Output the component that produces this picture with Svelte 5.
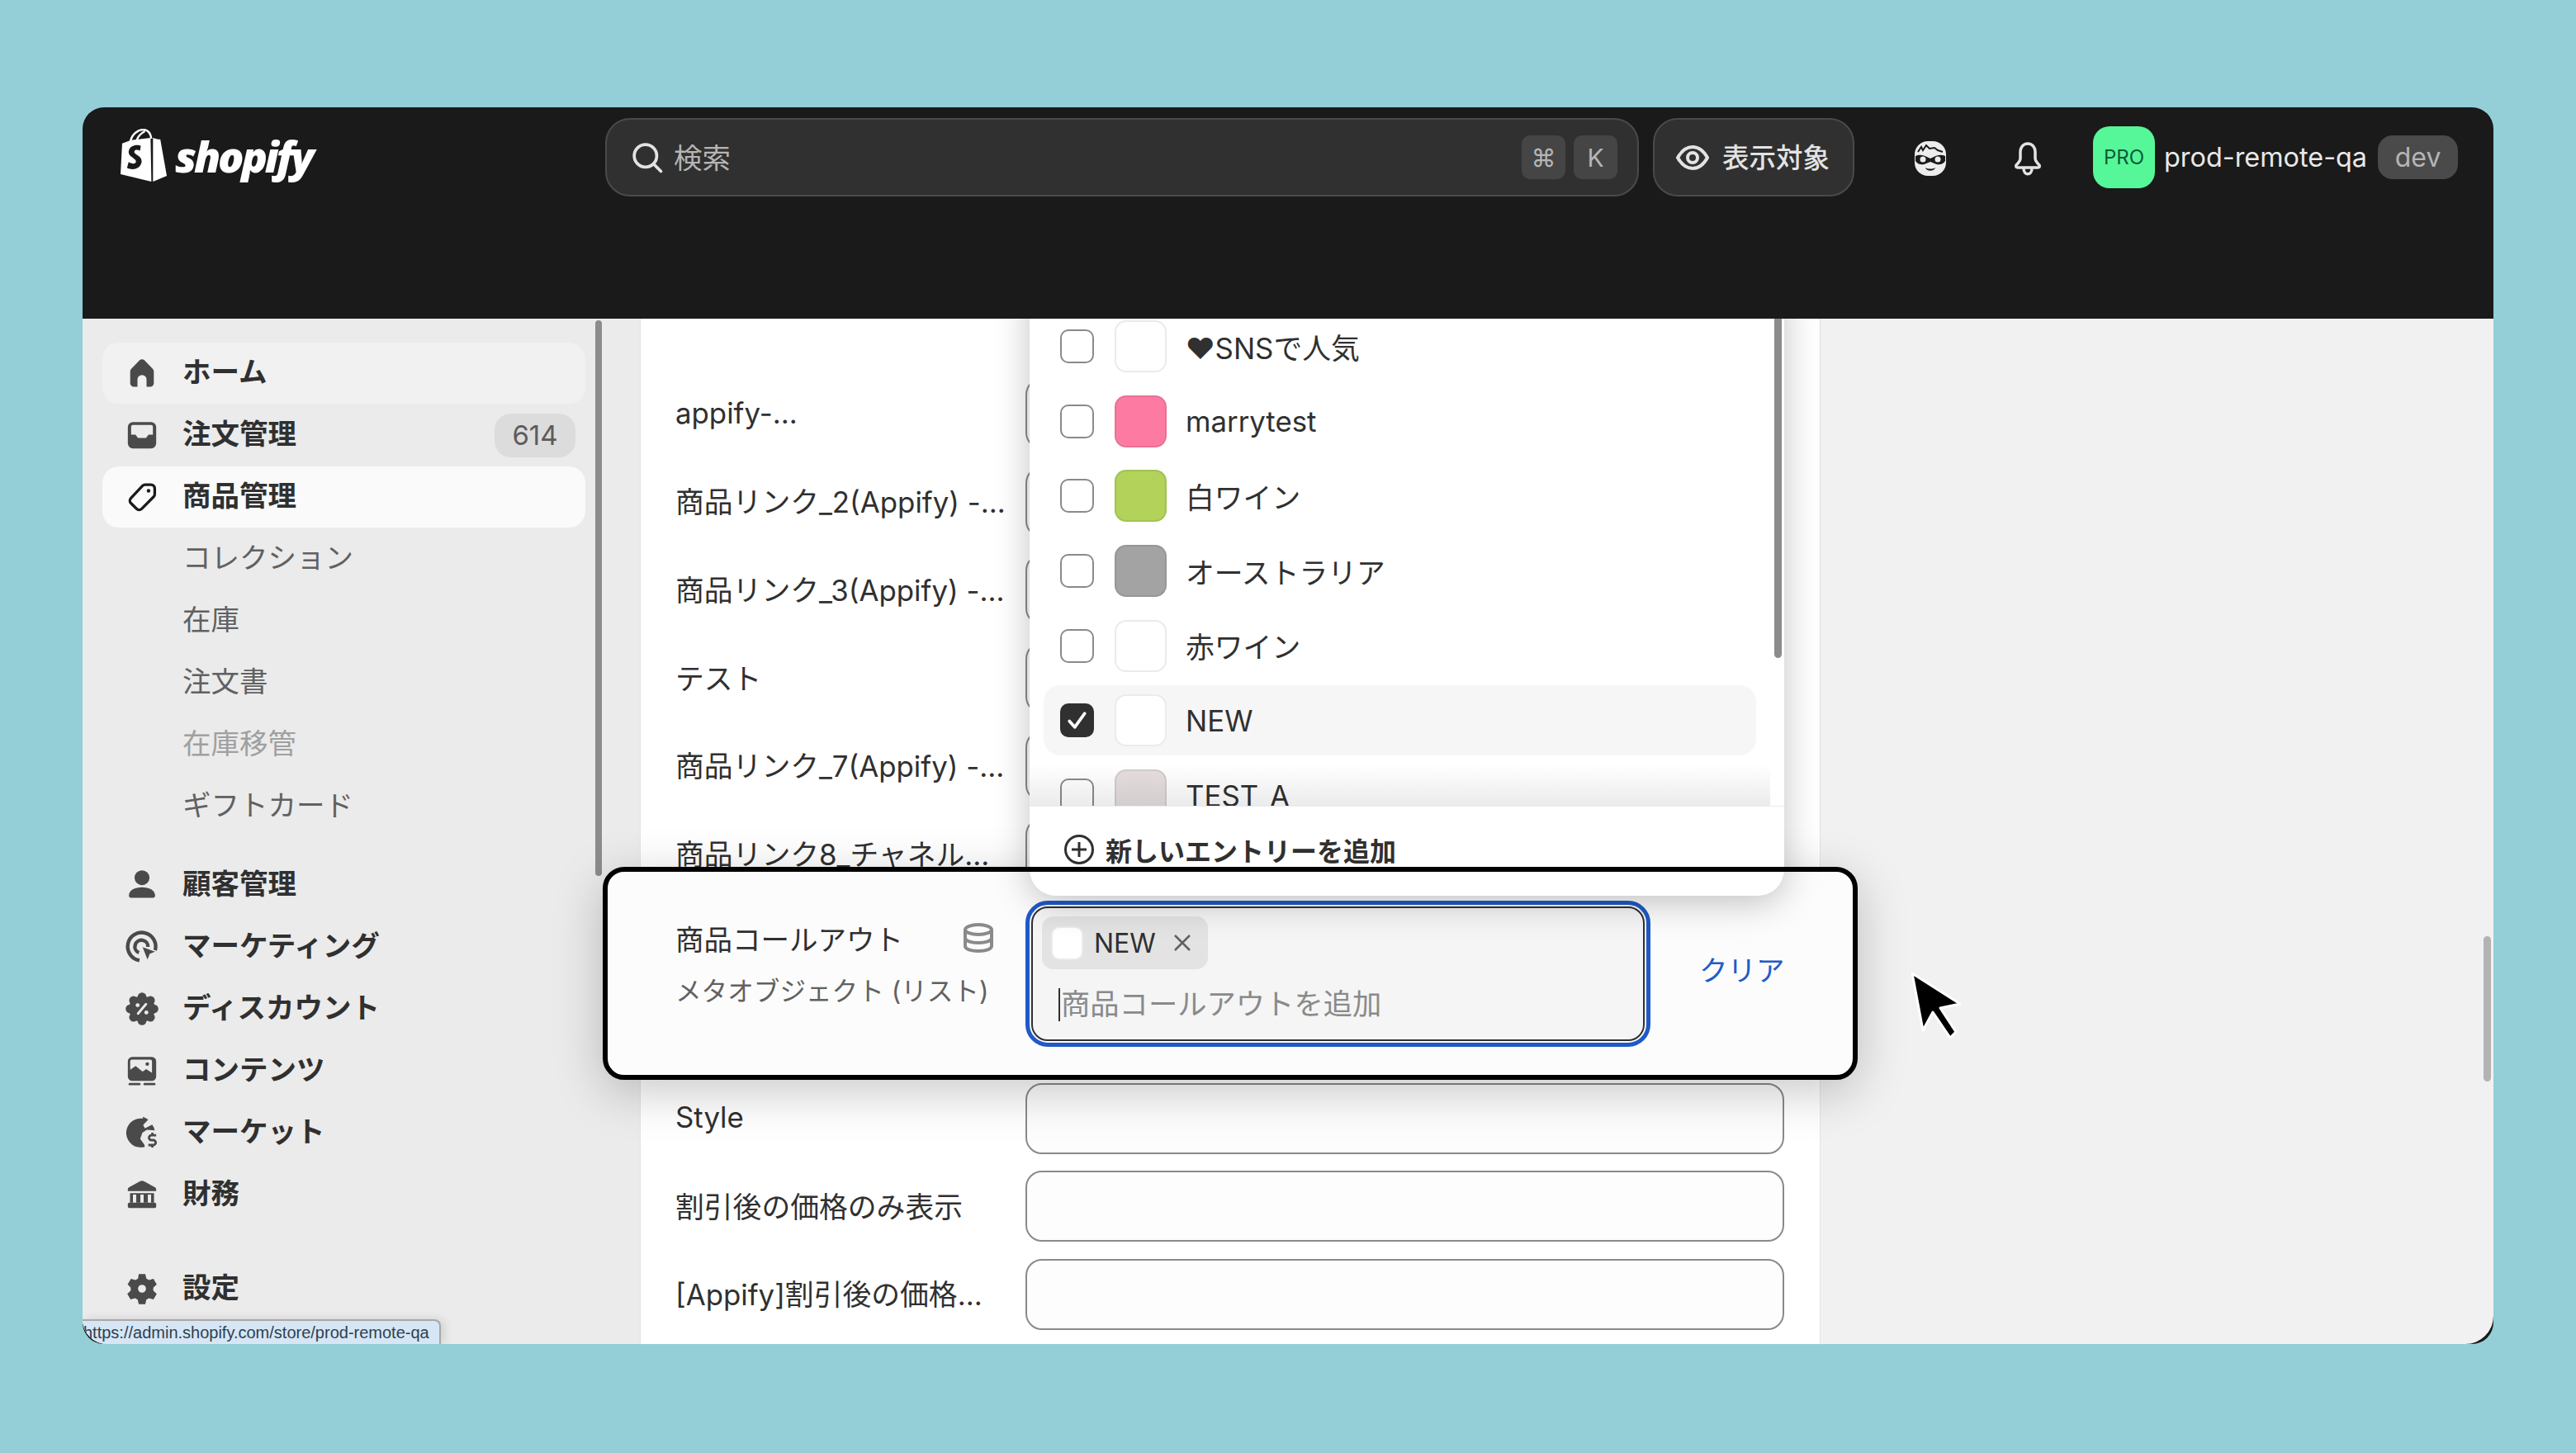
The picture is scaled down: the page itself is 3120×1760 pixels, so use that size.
<script lang="ts">
  const nav = [
    { label: 'ホーム', icon: 'home', hover: true },
    { label: '注文管理', icon: 'inbox', badge: '614' },
    { label: '商品管理', icon: 'tag', active: true },
    { label: 'コレクション', sub: true },
    { label: '在庫', sub: true },
    { label: '注文書', sub: true },
    { label: '在庫移管', sub: true, muted: true },
    { label: 'ギフトカード', sub: true },
  ];
  const nav2 = [
    { label: '顧客管理', icon: 'person' },
    { label: 'マーケティング', icon: 'target' },
    { label: 'ディスカウント', icon: 'discount' },
    { label: 'コンテンツ', icon: 'content' },
    { label: 'マーケット', icon: 'globe' },
    { label: '財務', icon: 'bank' },
  ];
  const fields = [
    'appify-...',
    '商品リンク_2(Appify) -...',
    '商品リンク_3(Appify) -...',
    'テスト',
    '商品リンク_7(Appify) -...',
    '商品リンク8_チャネル...',
    '',
    '',
    'Style',
    '割引後の価格のみ表示',
    '[Appify]割引後の価格...',
  ];
  const entries = [
    { label: '❤SNSで人気', color: '#ffffff' },
    { label: 'marrytest', color: '#fd7ba3' },
    { label: '白ワイン', color: '#b2d25a' },
    { label: 'オーストラリア', color: '#a3a3a3' },
    { label: '赤ワイン', color: '#ffffff' },
    { label: 'NEW', color: '#ffffff', checked: true },
    { label: 'TEST_A', color: '#e6dede' },
  ];
</script>

{#snippet navIcon(name: string)}
  <svg class="nav-icon" viewBox="0 0 20 20" aria-hidden="true">
    {#if name === 'home'}
      <path d="M8.6 3a2 2 0 0 1 2.8 0l4.5 4.6a2 2 0 0 1 .6 1.4v6.5a2 2 0 0 1-2 2h-2v-4a2.500 2.500 0 0 0-5 0v4h-2a2 2 0 0 1-2-2V9a2 2 0 0 1 .6-1.400z" />
    {:else if name === 'inbox'}
      <path fill-rule="evenodd" d="M5 2.800h10A2.800 2.800 0 0 1 17.800 5.600v9A2.800 2.800 0 0 1 15 17.400H5a2.800 2.800 0 0 1-2.800-2.800v-9A2.800 2.800 0 0 1 5 2.800zM5 4.400a1 1 0 0 0-1 1v4.400h2.400l1.400 1.800h4.400l1.400-1.800H16V5.400a1 1 0 0 0-1-1z" />
    {:else if name === 'tag'}
      <path class="line" d="M11.700 3.200h3.300a2 2 0 0 1 2 2v3.300a2 2 0 0 1-.6 1.400l-6.600 6.600a2 2 0 0 1-2.800 0l-3.100-3.100a2 2 0 0 1 0-2.800l6.400-6.800a2 2 0 0 1 1.400-.6z" />
      <circle class="dark" cx="13.600" cy="6.600" r="1" />
    {:else if name === 'person'}
      <circle cx="10" cy="6" r="4.100" />
      <path d="M2.800 15.800c0-3 3.200-4.600 7.200-4.600s7.200 1.600 7.200 4.600a1.200 1.200 0 0 1-1.200 1.200H4a1.200 1.200 0 0 1-1.200-1.200z" />
    {:else if name === 'target'}
      <path class="arc" d="M17.200 12A7.700 7.700 0 1 0 8.600 17.400" />
      <path class="arc" d="M13.300 10a3.600 3.600 0 1 0-5 3.200" />
      <path class="cut" d="M9.600 9.400l8.600 3.200-3.600 1.500-1.600 3.900z" />
    {:else if name === 'discount'}
      {#each [0, 45, 90, 135, 180, 225, 270, 315] as a}
        <circle cx="10" cy="3.400" r="2.400" transform="rotate({a} 10 10)" />
      {/each}
      <circle cx="10" cy="10" r="7.200" />
      <path class="slash" d="M12.200 7.400l-4.400 5.200" />
      <circle class="hole" cx="7.600" cy="8" r="1.100" />
      <circle class="hole" cx="12.400" cy="12" r="1.100" />
    {:else if name === 'content'}
      <path fill-rule="evenodd" d="M4.600 2.400h10.800A2.400 2.400 0 0 1 17.800 4.800v8.400a2.400 2.400 0 0 1-2.400 2.400H4.600a2.400 2.400 0 0 1-2.400-2.400V4.800a2.400 2.400 0 0 1 2.400-2.400zM4.400 3.900a.9.9 0 0 0-.9.9v4.600l3-2 3.800 3 2-1.300 3.200 2V4.800a.9.9 0 0 0-.9-.9z" />
      <circle cx="12.900" cy="6.300" r="1" />
      <rect x="2.600" y="16.700" width="6.600" height="1.300" rx=".65" />
      <rect x="10.800" y="16.700" width="6.600" height="1.300" rx=".65" />
    {:else if name === 'globe'}
      <path d="M10.500 2.200a8 8 0 1 0 1 15.600l-.2-1.200-2.300-3.200 1.200-3.400 2.500-1.600 4.300.4a8 8 0 0 0-1.400-3.200l-4 2-1-1.800 2.800-3a8 8 0 0 0-2.900-1.600z" />
      <path class="arc thin" d="M17.800 11.400h-2.600a1.300 1.300 0 0 0 0 2.700h1a1.300 1.300 0 0 1 0 2.700h-2.700M15.700 10v1.400M15.700 16.800v1.400" />
    {:else if name === 'bank'}
      <path d="M8.800 2.700a2.500 2.500 0 0 1 2.400 0l5.800 3.200c.6.300.8.800.8 1.300v.9H2.200v-.9c0-.5.200-1 .8-1.300z" />
      <path d="M3.400 9.200h13.200v5.200H15V10h-1.800v4.400h-2.300V10H9.100v4.400H6.800V10H5v4.400H3.400z" />
      <rect x="2.200" y="14.400" width="15.600" height="3" rx=".8" />
    {:else if name === 'gear'}
      <path fill-rule="evenodd" d="M8.200 1.900h3.600l.6 2.500 1.400.8 2.500-.7 1.800 3.100-1.900 1.800v1.600l1.900 1.800-1.800 3.100-2.500-.7-1.400.8-.6 2.500H8.200l-.6-2.500-1.400-.8-2.500.7-1.800-3.100 1.900-1.800V9.400L2.100 7.600l1.800-3.100 2.500.7 1.400-.8zM10 7.800a2.200 2.200 0 1 0 0 4.400 2.200 2.200 0 0 0 0-4.400z" />
    {/if}
  </svg>
{/snippet}

<div class="page">
  <div class="window">
    <header class="topbar">
      <div class="logo">
        <svg class="bag" viewBox="0 0 58 66" aria-hidden="true">
          <path d="M12 16C14 6 22 1 28 1 34 1 37 6 38 12M20 14C22 8 26 5 30 3" fill="none" stroke="#fff" stroke-width="2.500" />
          <path d="M2 18 13 14 37 11 38 65 0 56z" fill="#fff" />
          <path d="M40 11 46 13 49 13 57 58 40 65z" fill="#fff" />
          <path transform="translate(-6 -6)" d="M31 27c-3-2-14-2-15 7-1 7 10 8 9 13-1 3-6 2-9 0l-2 7c5 3 16 3 18-7 1-8-10-9-9-13 1-3 4-2 7-1z" fill="#1a1a1a" />
        </svg>
        <span class="wordmark">shopify</span>
      </div>

      <div class="search">
        <svg class="search-icon" viewBox="0 0 20 20" aria-hidden="true">
          <circle cx="9" cy="9" r="6.200" />
          <path d="M13.500 13.500 17.500 17.500" />
        </svg>
        <span class="search-text">検索</span>
        <span class="kbd">⌘</span>
        <span class="kbd">K</span>
      </div>

      <div class="visibility">
        <svg class="eye" viewBox="0 0 40 40" aria-hidden="true">
          <path d="M2 20C7 11 13 7 20 7s13 4 18 13c-5 9-11 13-18 13S7 29 2 20z" />
          <circle cx="20" cy="20" r="6" />
        </svg>
        <span class="vis-label">表示対象</span>
      </div>

      <svg class="mask" viewBox="0 0 40 44" aria-hidden="true">
        <rect x="1" y="1" width="38" height="42" rx="16" fill="#ececec" />
        <path d="M5 14 9 8 11 12 15 6 19 10 25 9 29 12 35 14" fill="none" stroke="#1a1a1a" stroke-width="2" />
        <path d="M2 19c6-3 12 0 18 3 6-3 12-6 18-3v6c-3 5-9 5-13 3l-5-2-5 2c-4 2-10 2-13-3z" fill="#1a1a1a" />
        <circle cx="11" cy="23" r="3.500" fill="#ececec" />
        <circle cx="29" cy="23" r="3.500" fill="#ececec" />
        <path d="M14 33c3 2 9 2 12 0-1 5-11 5-12 0z" fill="#1a1a1a" />
      </svg>

      <svg class="bell" viewBox="0 0 38 42" aria-hidden="true">
        <path d="M19 3c-6 0-9 5-9 10v8c0 3-2 5-5 8-1 2 0 3 2 3h24c2 0 3-1 2-3-3-3-5-5-5-8v-8c0-5-3-10-9-10z" />
        <path d="M14 33c0 9 10 9 10 0" />
      </svg>

      <div class="store">
        <span class="avatar">PRO</span>
        <span class="store-name">prod-remote-qa</span>
        <span class="dev">dev</span>
      </div>
    </header>

    <div class="body">
      <aside class="sidebar">
        <nav class="nav">
          {#each nav as item}
            <div class="nav-item" class:hover={item.hover} class:active={item.active} class:sub={item.sub} class:muted={item.muted}>
              {#if item.icon}{@render navIcon(item.icon)}{/if}
              <span class="nav-label">{item.label}</span>
              {#if item.badge}<span class="badge">{item.badge}</span>{/if}
            </div>
          {/each}
        </nav>
        <nav class="nav second">
          {#each nav2 as item}
            <div class="nav-item">
              {@render navIcon(item.icon)}
              <span class="nav-label">{item.label}</span>
            </div>
          {/each}
        </nav>
        <nav class="nav third">
          <div class="nav-item">
            {@render navIcon('gear')}
            <span class="nav-label">設定</span>
          </div>
        </nav>
        <div class="side-thumb"></div>
      </aside>

      <main class="main">
        <section class="card">
          {#each fields as label}
            <div class="field">
              <span class="field-label">{label}</span>
              <div class="input"></div>
            </div>
          {/each}
        </section>
        <div class="main-thumb"></div>
      </main>

      <div class="callout">
        <div class="callout-text">
          <div class="callout-title">
            <span>商品コールアウト</span>
            <svg class="db" viewBox="0 0 38 36" aria-hidden="true">
              <ellipse cx="19" cy="8" rx="16" ry="6" />
              <path d="M3 8v20c0 3.500 7 6 16 6s16-2.500 16-6V8M3 18c0 3.500 7 6 16 6s16-2.500 16-6" />
            </svg>
          </div>
          <span class="callout-type">メタオブジェクト (リスト)</span>
        </div>
        <div class="combo">
          <div class="chip">
            <span class="chip-swatch"></span>
            <span>NEW</span>
            <svg class="chip-x" viewBox="0 0 24 24" aria-hidden="true"><path d="M3 3 21 21M21 3 3 21" /></svg>
          </div>
          <div class="combo-input">
            <span class="caret"></span>
            <span>商品コールアウトを追加</span>
          </div>
        </div>
        <span class="clear">クリア</span>
      </div>

      <div class="popover">
        <div class="list">
          {#each entries as entry}
            <div class="entry" class:checked={entry.checked}>
              <span class="check">
                {#if entry.checked}
                  <svg viewBox="0 0 20 20" aria-hidden="true"><path d="M5 10.500 8.500 14.500 15 5.500" /></svg>
                {/if}
              </span>
              <span class="swatch" class:blank={entry.color === '#ffffff'} style="background: {entry.color}"></span>
              <span>{entry.label}</span>
            </div>
          {/each}
          <div class="list-fade"></div>
          <div class="list-thumb"></div>
        </div>
        <div class="add">
          <svg class="plus" viewBox="0 0 38 38" aria-hidden="true">
            <circle cx="19" cy="19" r="16.500" />
            <path d="M19 10v18M10 19h18" />
          </svg>
          <span>新しいエントリーを追加</span>
        </div>
      </div>

      <div class="frame"></div>

      <svg class="cursor" viewBox="0 0 70 90" aria-hidden="true">
        <path d="M5 5 63 42 39 47 58 76 51 83 30 52 18 74z" />
      </svg>

      <div class="status">https://admin.shopify.com/store/prod-remote-qa</div>
    </div>
  </div>
</div>

<style>
  :global(body) {
    margin: 0;
    background: #94cfd7;
    font-family: Inter, "Noto Sans CJK JP", sans-serif;
    color: #303030;
  }

  .page {
    width: 3120px;
    height: 1760px;
    padding: 130px 100px 132px;
    box-sizing: border-box;
  }

  .window {
    height: 100%;
    display: flex;
    flex-direction: column;
    background: #1a1a1a;
    border-radius: 26px;
    overflow: hidden;
  }

  /* top bar */
  .topbar {
    height: 256px;
    flex-shrink: 0;
    display: flex;
    align-items: flex-start;
    padding-top: 13px;
    box-sizing: border-box;
    color: #e3e3e3;
  }

  .logo {
    width: 633px;
    flex-shrink: 0;
    display: flex;
    align-items: center;
    gap: 9px;
    padding: 13px 0 0 46px;
    box-sizing: border-box;
  }

  .bag {
    width: 57px;
    height: 65px;
  }

  .wordmark {
    font-family: "Open Sans", sans-serif;
    font-style: italic;
    font-weight: 800;
    font-size: 52px;
    line-height: 56px;
    letter-spacing: -3.200px;
    color: #fff;
  }

  .search {
    width: 1252px;
    height: 95px;
    box-sizing: border-box;
    display: flex;
    align-items: center;
    gap: 10px;
    padding: 0 24px 0 27px;
    background: #303030;
    border: 2px solid #4a4a4a;
    border-radius: 30px;
  }

  .search-icon {
    width: 44px;
    height: 44px;
    fill: none;
    stroke: #e3e3e3;
    stroke-width: 1.700;
    stroke-linecap: round;
  }

  .search-text {
    flex: 1;
    padding-bottom: 4px;
    font-size: 34.500px;
    color: #b5b5b5;
  }

  .kbd {
    width: 53px;
    height: 53px;
    display: flex;
    align-items: center;
    justify-content: center;
    background: #454545;
    border-radius: 10px;
    font-size: 30px;
    color: #b5b5b5;
  }

  .visibility {
    width: 244px;
    height: 95px;
    margin-left: 17px;
    box-sizing: border-box;
    display: flex;
    align-items: center;
    gap: 16px;
    padding-left: 26px;
    background: #303030;
    border: 2px solid #4a4a4a;
    border-radius: 30px;
    font-size: 32.500px;
    font-weight: 500;
  }

  .vis-label {
    padding-bottom: 4px;
  }

  .eye {
    width: 40px;
    height: 40px;
    fill: none;
    stroke: #e3e3e3;
    stroke-width: 4;
  }

  .mask {
    width: 40px;
    height: 44px;
    margin: 27px 0 0 72px;
  }

  .bell {
    width: 38px;
    height: 42px;
    margin: 28px 0 0 79px;
    fill: none;
    stroke: #e3e3e3;
    stroke-width: 3.500;
    stroke-linejoin: round;
  }

  .store {
    margin: 10px 0 0 60px;
    display: flex;
    align-items: center;
  }

  .avatar {
    width: 75px;
    height: 75px;
    display: flex;
    align-items: center;
    justify-content: center;
    background: #56f798;
    border-radius: 20px;
    font-size: 24px;
    color: #0b5b3a;
  }

  .store-name {
    margin-left: 11px;
    font-size: 32.400px;
    color: #e8e8e8;
  }

  .dev {
    margin-left: 13px;
    width: 97px;
    height: 53px;
    display: flex;
    align-items: center;
    justify-content: center;
    background: #4a4a4a;
    border-radius: 18px;
    font-size: 32px;
    color: #b5b5b5;
  }

  /* body */
  .body {
    flex: 1;
    min-height: 0;
    position: relative;
    display: flex;
    overflow: hidden;
    background: #f1f1f1;
    border-radius: 0 0 34px 30px;
  }

  .sidebar {
    width: 675px;
    flex-shrink: 0;
    position: relative;
    padding: 29px 66px 0 24px;
    box-sizing: border-box;
    background: #ebebeb;
  }

  .nav {
    display: flex;
    flex-direction: column;
    gap: 1px;
  }

  .second {
    margin-top: 21px;
  }

  .third {
    margin-top: 40px;
  }

  .nav-item {
    height: 74px;
    display: flex;
    align-items: center;
    padding: 0 12px 0 26px;
    border-radius: 20px;
    font-size: 34.500px;
    font-weight: 700;
    color: #303030;
  }

  .nav-item.hover {
    background: #f1f1f1;
  }

  .nav-item.active {
    background: #fafafa;
  }

  .nav-item.sub {
    padding-left: 97px;
    font-weight: 400;
    color: #616161;
  }

  .nav-item.muted {
    color: #a0a0a0;
  }

  .nav-label {
    flex: 1;
    padding-bottom: 8px;
  }

  .nav-icon {
    width: 44px;
    height: 44px;
    margin-right: 27px;
    flex-shrink: 0;
    fill: #4a4a4a;
  }

  .nav-icon .line {
    fill: none;
    stroke: #1a1a1a;
    stroke-width: 1.500;
  }

  .nav-icon .dark {
    fill: #1a1a1a;
  }

  .nav-icon .arc {
    fill: none;
    stroke: #4a4a4a;
    stroke-width: 2;
  }

  .nav-icon .thin {
    stroke-width: 1.300;
  }

  .nav-icon .cut {
    stroke: #ebebeb;
    stroke-width: .8;
  }

  .nav-icon .slash {
    fill: none;
    stroke: #ebebeb;
    stroke-width: 1.300;
    stroke-linecap: round;
  }

  .nav-icon .hole {
    fill: #ebebeb;
  }

  .badge {
    width: 98px;
    height: 53px;
    display: flex;
    align-items: center;
    justify-content: center;
    background: #dcdcdc;
    border-radius: 20px;
    font-size: 33px;
    font-weight: 400;
    color: #5c5c5c;
  }

  .side-thumb {
    position: absolute;
    left: 621px;
    top: 2px;
    width: 8px;
    height: 673px;
    background: #8c8c8c;
    border-radius: 4px;
  }

  /* field list */
  .main {
    flex: 1;
    position: relative;
    overflow: hidden;
  }

  .card {
    width: 1430px;
    box-sizing: border-box;
    padding: 72px 43px 0 42px;
    display: flex;
    flex-direction: column;
    gap: 20.700px;
    background: #fff;
    border: solid #e3e3e3;
    border-width: 0 1px;
    height: 100%;
  }

  .field {
    flex-shrink: 0;
    height: 86px;
    display: grid;
    grid-template-columns: 424px 1fr;
    align-items: center;
  }

  .field-label {
    padding-bottom: 3px;
    font-size: 34.800px;
    white-space: nowrap;
    color: #303030;
  }

  .input {
    height: 86px;
    box-sizing: border-box;
    background: #fdfdfd;
    border: 2px solid #8a8a8a;
    border-radius: 20px;
  }

  .main-thumb {
    position: absolute;
    right: 3px;
    top: 748px;
    width: 9px;
    height: 176px;
    background: #b3b3b3;
    border-radius: 5px;
  }

  /* highlighted row */
  .callout {
    position: absolute;
    left: 630px;
    top: 664px;
    width: 1520px;
    height: 258px;
    box-sizing: border-box;
    display: flex;
    background: #fcfcfc;
    border-radius: 26px;
    box-shadow: 0 14px 60px rgba(0, 0, 0, .22);
  }

  .callout-text {
    width: 519px;
    padding: 62px 0 0 88px;
    box-sizing: border-box;
    flex-shrink: 0;
  }

  .callout-title {
    width: 386px;
    height: 48px;
    display: flex;
    align-items: center;
    justify-content: space-between;
    font-size: 34.500px;
    color: #303030;
  }

  .db {
    width: 38px;
    height: 36px;
    fill: none;
    stroke: #8a8a8a;
    stroke-width: 4;
  }

  .callout-type {
    display: block;
    margin-top: 15px;
    font-size: 31.600px;
    white-space: nowrap;
    color: #616161;
  }

  .combo {
    width: 743px;
    height: 163px;
    margin-top: 48px;
    flex-shrink: 0;
    box-sizing: border-box;
    padding: 10px 11px;
    background: #f5f5f5;
    border: 2px solid #303030;
    border-radius: 20px;
    outline: 5px solid #2059c8;
    outline-offset: 2px;
  }

  .chip {
    width: 201px;
    height: 64px;
    box-sizing: border-box;
    display: flex;
    align-items: center;
    padding-left: 11px;
    background: #e3e3e3;
    border-radius: 14px;
    font-size: 32px;
    color: #303030;
  }

  .chip-swatch {
    width: 39px;
    height: 41px;
    margin-right: 13px;
    flex-shrink: 0;
    background: #fff;
    border: 2px solid #ebebeb;
    border-radius: 10px;
    box-sizing: border-box;
  }

  .chip-x {
    width: 24px;
    height: 24px;
    margin-left: 20px;
    fill: none;
    stroke: #616161;
    stroke-width: 2.500;
  }

  .combo-input {
    height: 40px;
    margin: 23px 0 0 20px;
    display: flex;
    align-items: center;
    gap: 1px;
    font-size: 35.300px;
    line-height: 40px;
    color: #8a8a8a;
  }

  .caret {
    width: 2px;
    height: 40px;
    background: #303030;
  }

  .clear {
    margin: 106px 0 0 66px;
    font-size: 34.500px;
    line-height: 40px;
    color: #1f5cc9;
  }

  /* combobox dropdown */
  .popover {
    position: absolute;
    left: 1147px;
    top: -40px;
    width: 914px;
    height: 739px;
    display: flex;
    flex-direction: column;
    background: #fff;
    border-radius: 0 0 32px 32px;
    box-shadow: 0 8px 44px rgba(0, 0, 0, .24);
  }

  .list {
    position: relative;
    height: 631px;
    flex-shrink: 0;
    box-sizing: border-box;
    padding: 31px 34px 0 17px;
    overflow: hidden;
    display: flex;
    flex-direction: column;
    gap: 5.700px;
    border-bottom: 1px solid #ebebeb;
  }

  .entry {
    flex-shrink: 0;
    height: 85px;
    display: flex;
    align-items: center;
    padding-left: 20px;
    border-radius: 20px;
    font-size: 34.800px;
    color: #303030;
  }

  .entry.checked {
    background: #f6f6f6;
  }

  .check {
    width: 41px;
    height: 41px;
    box-sizing: border-box;
    flex-shrink: 0;
    background: #fff;
    border: 2px solid #8a8a8a;
    border-radius: 10px;
  }

  .checked .check {
    background: #303030;
    border-color: #303030;
  }

  .check svg {
    display: block;
    fill: none;
    stroke: #fff;
    stroke-width: 2;
    stroke-linecap: round;
    stroke-linejoin: round;
  }

  .swatch {
    width: 63px;
    height: 63px;
    box-sizing: border-box;
    margin: 0 23px 0 25px;
    flex-shrink: 0;
    border: 2px solid rgba(0, 0, 0, .08);
    border-radius: 14px;
  }

  .list-fade {
    position: absolute;
    left: 0;
    right: 17px;
    bottom: 0;
    height: 50px;
    background: linear-gradient(rgba(0, 0, 0, 0), rgba(0, 0, 0, .08));
  }

  .list-thumb {
    position: absolute;
    right: 3px;
    top: 0;
    width: 9px;
    height: 451px;
    background: #8c8c8c;
    border-radius: 5px;
  }

  .add {
    display: flex;
    align-items: center;
    gap: 13px;
    padding: 29px 0 0 41px;
    font-size: 32px;
    font-weight: 700;
    color: #303030;
  }

  .plus {
    width: 38px;
    height: 38px;
    fill: none;
    stroke: #303030;
    stroke-width: 3;
  }

  .frame {
    position: absolute;
    left: 630px;
    top: 664px;
    width: 1520px;
    height: 258px;
    box-sizing: border-box;
    border: 6px solid #000;
    border-radius: 26px;
  }

  .cursor {
    position: absolute;
    left: 2211px;
    top: 788px;
    width: 70px;
    height: 90px;
    fill: #000;
    stroke: #fff;
    stroke-width: 3;
    stroke-linejoin: round;
  }

  .status {
    position: absolute;
    left: 0;
    bottom: 0;
    height: 28px;
    padding: 0 12px 0 1px;
    background: #d6e6f5;
    border: solid #a8a8a8;
    border-width: 2px 2px 0 0;
    border-radius: 0 8px 0 0;
    font-family: "Liberation Sans", sans-serif;
    font-size: 20px;
    line-height: 28px;
    color: #2f3f4f;
    box-shadow: 4px 0 12px rgba(0, 0, 0, .12);
  }
</style>
